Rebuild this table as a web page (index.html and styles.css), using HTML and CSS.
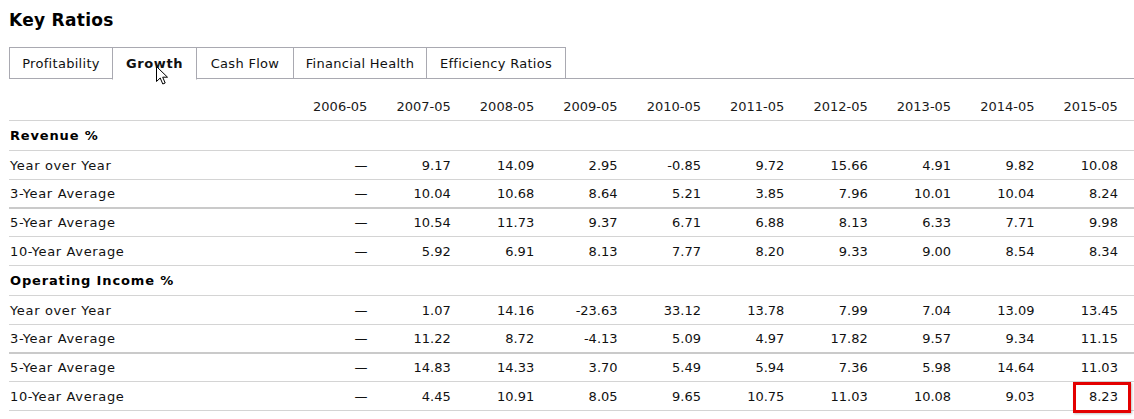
FILE: index.html
```html
<!DOCTYPE html>
<html lang="en">
<head>
<meta charset="utf-8">
<title>Key Ratios</title>
<link rel="stylesheet" href="styles.css">
</head>
<body>
<div class="page">
  <h1 class="title">Key Ratios</h1>
  <div class="tabs">
    <div class="tab tab-profit">Profitability</div>
    <div class="tab tab-growth active">Growth
      <svg class="cursor" width="13" height="20" viewBox="0 0 13 20"><path d="M0.5 0.5 L0.5 15.5 L4.2 12 L6.8 18 L9.2 17 L6.7 11.2 L11.5 11.2 Z" fill="#fff" stroke="#000" stroke-width="1" stroke-linejoin="miter"/></svg>
    </div>
    <div class="tab tab-cash">Cash Flow</div>
    <div class="tab tab-health">Financial Health</div>
    <div class="tab tab-eff">Efficiency Ratios</div>
  </div>
  <div class="grid">
    <div class="row head"><div class="c lbl"></div><div class="c">2006-05</div><div class="c">2007-05</div><div class="c">2008-05</div><div class="c">2009-05</div><div class="c">2010-05</div><div class="c">2011-05</div><div class="c">2012-05</div><div class="c">2013-05</div><div class="c">2014-05</div><div class="c">2015-05</div></div>
    <div class="row section"><div class="c lbl">Revenue %</div></div>
    <div class="row r29"><div class="c lbl">Year over Year</div><div class="c">—</div><div class="c">9.17</div><div class="c">14.09</div><div class="c">2.95</div><div class="c">-0.85</div><div class="c">9.72</div><div class="c">15.66</div><div class="c">4.91</div><div class="c">9.82</div><div class="c">10.08</div></div>
    <div class="row r29 thick"><div class="c lbl">3-Year Average</div><div class="c">—</div><div class="c">10.04</div><div class="c">10.68</div><div class="c">8.64</div><div class="c">5.21</div><div class="c">3.85</div><div class="c">7.96</div><div class="c">10.01</div><div class="c">10.04</div><div class="c">8.24</div></div>
    <div class="row r28"><div class="c lbl">5-Year Average</div><div class="c">—</div><div class="c">10.54</div><div class="c">11.73</div><div class="c">9.37</div><div class="c">6.71</div><div class="c">6.88</div><div class="c">8.13</div><div class="c">6.33</div><div class="c">7.71</div><div class="c">9.98</div></div>
    <div class="row r29"><div class="c lbl">10-Year Average</div><div class="c">—</div><div class="c">5.92</div><div class="c">6.91</div><div class="c">8.13</div><div class="c">7.77</div><div class="c">8.20</div><div class="c">9.33</div><div class="c">9.00</div><div class="c">8.54</div><div class="c">8.34</div></div>
    <div class="row section"><div class="c lbl">Operating Income %</div></div>
    <div class="row r29"><div class="c lbl">Year over Year</div><div class="c">—</div><div class="c">1.07</div><div class="c">14.16</div><div class="c">-23.63</div><div class="c">33.12</div><div class="c">13.78</div><div class="c">7.99</div><div class="c">7.04</div><div class="c">13.09</div><div class="c">13.45</div></div>
    <div class="row r29 thick"><div class="c lbl">3-Year Average</div><div class="c">—</div><div class="c">11.22</div><div class="c">8.72</div><div class="c">-4.13</div><div class="c">5.09</div><div class="c">4.97</div><div class="c">17.82</div><div class="c">9.57</div><div class="c">9.34</div><div class="c">11.15</div></div>
    <div class="row r28"><div class="c lbl">5-Year Average</div><div class="c">—</div><div class="c">14.83</div><div class="c">14.33</div><div class="c">3.70</div><div class="c">5.49</div><div class="c">5.94</div><div class="c">7.36</div><div class="c">5.98</div><div class="c">14.64</div><div class="c">11.03</div></div>
    <div class="row r29"><div class="c lbl">10-Year Average</div><div class="c">—</div><div class="c">4.45</div><div class="c">10.91</div><div class="c">8.05</div><div class="c">9.65</div><div class="c">10.75</div><div class="c">11.03</div><div class="c">10.08</div><div class="c">9.03</div><div class="c highlight">8.23<span class="mark"></span></div></div>
  </div>
</div>
</body>
</html>
```

FILE: styles.css
```css
html, body {
  margin: 0;
  padding: 0;
  background: #fff;
}
body {
  font-family: "DejaVu Sans", Verdana, sans-serif;
  font-size: 13px;
  color: #111;
  width: 1134px;
  height: 419px;
  overflow: hidden;
}
.page {
  padding: 10px 0 0 9px;
}
.title {
  margin: 0;
  font-size: 17px;
  line-height: 20px;
  font-weight: bold;
  letter-spacing: 0.3px;
  color: #000;
}
.tabs {
  margin-top: 17px;
  display: flex;
  border-bottom: 1px solid #a9a9b1;
  height: 32px;
  box-sizing: border-box;
}
.tab {
  position: relative;
  box-sizing: border-box;
  height: 32px;
  border: 1px solid #a9a9b1;
  margin-left: -1px;
  line-height: 31px;
  text-align: center;
  color: #111;
  background: #fff;
  letter-spacing: 0.3px;
}
.tab:first-child { margin-left: 0; }
.tab.active {
  font-weight: bold;
  border-bottom: 1px solid #fff;
  height: 33px;
  letter-spacing: 0.6px;
  z-index: 1;
}
.tab-profit { width: 104px; }
.tab-growth { width: 85px; }
.tab-cash { width: 98px; }
.tab-health { width: 134px; }
.tab-eff { width: 140px; }
.cursor {
  position: absolute;
  left: 43px;
  top: 18px;
}
.grid {
  width: 1125px;
}
.row {
  display: grid;
  grid-template-columns: 291px repeat(10, 83.4px);
  box-sizing: border-box;
  border-bottom: 1px solid #d4d4d4;
  align-items: center;
  line-height: 15px;
}
.row.head {
  height: 42px;
  align-items: end;
  padding-bottom: 6px;
  color: #1a1a1a;
}
.row.section {
  height: 30px;
  font-weight: bold;
  color: #000;
}
.row.section .lbl {
  letter-spacing: 0.85px;
}
.row.r29 { height: 29px; }
.row.r28 { height: 28px; }
.row.thick { border-bottom: 2px solid #cacaca; }
.c {
  text-align: right;
  padding-right: 16px;
  white-space: nowrap;
}
.c.lbl {
  text-align: left;
  padding: 0 0 0 1px;
  letter-spacing: 0.65px;
}
.highlight {
  position: relative;
}
.mark {
  position: absolute;
  left: 22px;
  top: -7px;
  width: 58px;
  height: 31px;
  box-sizing: border-box;
  border: 3px solid #e30000;
  box-shadow: 1px 1px 2px rgba(0,0,0,0.25);
}
```
